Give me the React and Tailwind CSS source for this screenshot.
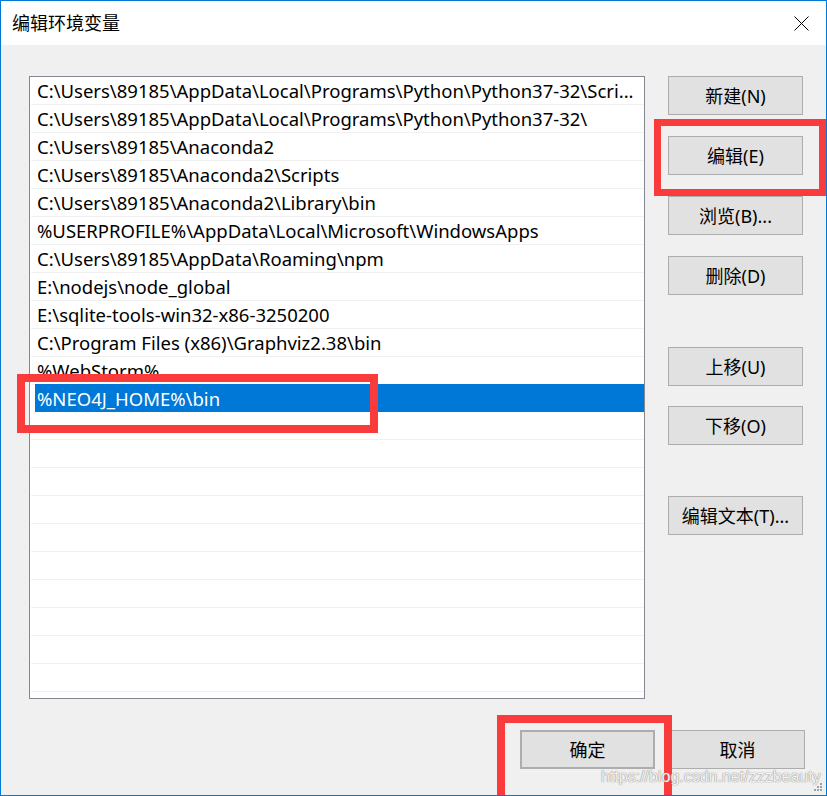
import React from 'react';

const paths = [
  'C:\\Users\\89185\\AppData\\Local\\Programs\\Python\\Python37-32\\Scri...',
  'C:\\Users\\89185\\AppData\\Local\\Programs\\Python\\Python37-32\\',
  'C:\\Users\\89185\\Anaconda2',
  'C:\\Users\\89185\\Anaconda2\\Scripts',
  'C:\\Users\\89185\\Anaconda2\\Library\\bin',
  '%USERPROFILE%\\AppData\\Local\\Microsoft\\WindowsApps',
  'C:\\Users\\89185\\AppData\\Roaming\\npm',
  'E:\\nodejs\\node_global',
  'E:\\sqlite-tools-win32-x86-3250200',
  'C:\\Program Files (x86)\\Graphviz2.38\\bin',
  '%WebStorm%',
  '%NEO4J_HOME%\\bin',
];

const font = { fontFamily: '"Noto Sans", "Noto Sans CJK SC", sans-serif' };

function Btn({ children, className = '' }) {
  return (
    <button className={'w-[135px] h-[39px] bg-[#e1e1e1] border border-[#adadad] text-[18px] text-black leading-none ' + className}>
      {children}
    </button>
  );
}

export default function App() {
  const rows = [...paths];
  while (rows.length < 23) rows.push('');

  return (
    <div className="relative w-[827px] h-[796px] overflow-hidden border border-[#0078d7] bg-[#f0f0f0]" style={font}>
      {/* title bar */}
      <div className="h-[44px] bg-white flex items-center justify-between pl-[11px] pr-[17px]">
        <span className="text-[18px] text-black">编辑环境变量</span>
        <svg width="15" height="15" viewBox="0 0 15 15" className="mt-[1px]">
          <path d="M0.5 0.5 L14.5 14.5 M14.5 0.5 L0.5 14.5" stroke="#000" strokeWidth="1" />
        </svg>
      </div>

      <div className="flex pl-[28px] pt-[31px]">
        {/* path list */}
        <div className="w-[616px] h-[623px] bg-white border border-[#828790] overflow-hidden pl-[1px]">
          {rows.map((p, i) =>
            i === 11 ? (
              <div key={i} className="h-[28px] pl-[4px]">
                <div className="h-[28px] bg-[#0078d7] text-white text-[18.5px] leading-[29px] pl-[2px] -mt-[1px] whitespace-nowrap">{p}</div>
              </div>
            ) : (
              <div key={i} className="h-[28px] border-b border-[#f0f0f0] text-[18.5px] leading-[28px] text-black pl-[6px] pr-[8px] whitespace-nowrap overflow-hidden">
                {p}
              </div>
            )
          )}
        </div>

        {/* side buttons */}
        <div className="ml-[23px] flex flex-col">
          <Btn>新建(N)</Btn>
          <Btn className="mt-[21px]">编辑(E)</Btn>
          <Btn className="mt-[21px]">浏览(B)...</Btn>
          <Btn className="mt-[21px]">删除(D)</Btn>
          <Btn className="mt-[52px]">上移(U)</Btn>
          <Btn className="mt-[20px]">下移(O)</Btn>
          <Btn className="mt-[51px]">编辑文本(T)...</Btn>
        </div>
      </div>

      {/* bottom buttons */}
      <div className="flex justify-end gap-[15px] pr-[21px] mt-[31px]">
        <Btn className="border-2 border-[#0078d7]">确定</Btn>
        <Btn>取消</Btn>
      </div>

      {/* red annotation boxes */}
      <div className="absolute left-[653px] top-[118px] w-[172px] h-[77px] border-[7px] border-[#f93b3b]" />
      <div className="absolute left-[16px] top-[373px] w-[361px] h-[59px] border-[8px] border-[#f93b3b]" />
      <div className="absolute left-[496px] top-[714px] w-[175px] h-[90px] border-[8px] border-[#f93b3b]" />

      {/* watermark */}
      <div
        className="absolute left-[600px] top-[766px] text-[16px] leading-[20px] text-white/90 whitespace-nowrap"
        style={{ fontFamily: '"Liberation Sans", Arial, sans-serif', textShadow: '0 0 1px #7a7a7a, 0 0 1px #9a9a9a' }}
      >
        https://blog.csdn.net/zzzbeauty
      </div>

      {/* resize grip */}
      <svg className="absolute right-[3px] bottom-[3px]" width="10" height="10" viewBox="0 0 10 10">
        <rect x="7" y="1" width="2" height="2" fill="#a0a0a0" />
        <rect x="4" y="4" width="2" height="2" fill="#a0a0a0" />
        <rect x="7" y="4" width="2" height="2" fill="#a0a0a0" />
        <rect x="1" y="7" width="2" height="2" fill="#a0a0a0" />
        <rect x="4" y="7" width="2" height="2" fill="#a0a0a0" />
        <rect x="7" y="7" width="2" height="2" fill="#a0a0a0" />
      </svg>
    </div>
  );
}
